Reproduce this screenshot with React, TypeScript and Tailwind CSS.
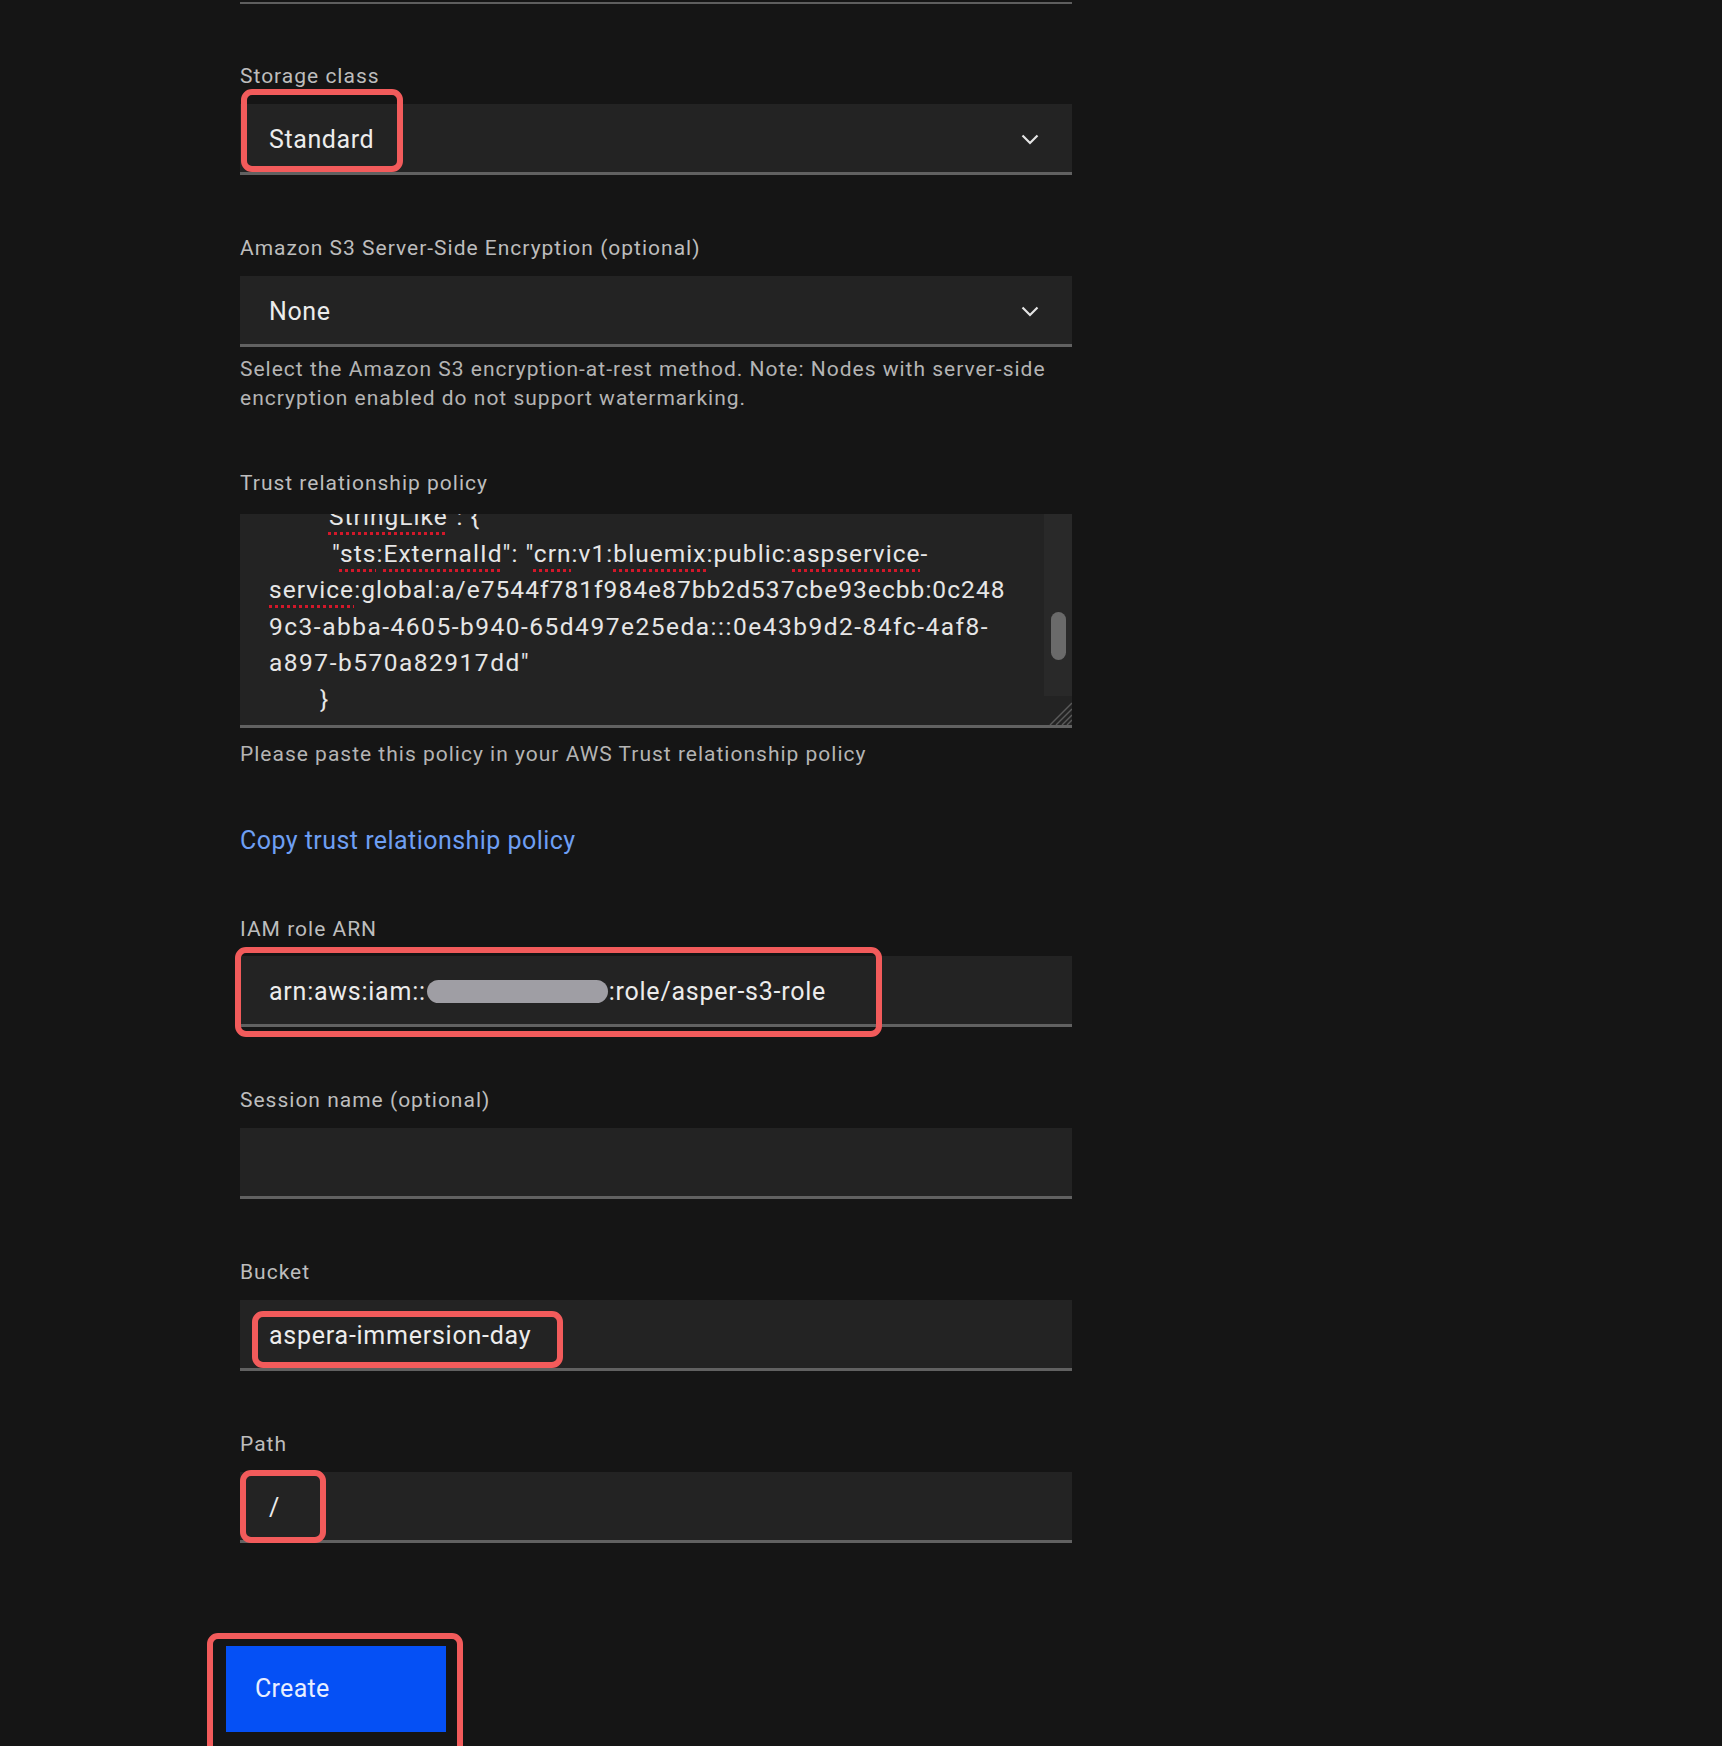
import React from "react";

const FONT = "font-['Roboto',sans-serif]";

function Chevron() {
  return (
    <svg width="18" height="11" viewBox="0 0 18 11" fill="none" className="shrink-0">
      <polyline points="1.5,1.5 9,9 16.5,1.5" stroke="#e4e4e4" strokeWidth="2.2" strokeLinejoin="miter" />
    </svg>
  );
}

function Label({ children, mt, mb }: { children: React.ReactNode; mt: string; mb: string }) {
  return (
    <div className={`${mt} ${mb} h-[24px] text-[21px] leading-[24px] tracking-[1px] text-[#bdbdbd]`}>{children}</div>
  );
}

function RedBox({ className }: { className: string }) {
  return <div className={`pointer-events-none absolute rounded-[11px] border-[6px] border-[#f25b5b] ${className}`} />;
}

const squiggle = "underline decoration-dotted decoration-[#d3182a] decoration-[3px] underline-offset-[7px]";

export default function App() {
  return (
    <div className={`${FONT} h-[1746px] w-full overflow-hidden bg-[#151515]`}>
      <div className="ml-[240px] flex w-[832px] flex-col">
        <div className="mt-[2px] h-[2px] bg-[#5e5e5e]" />

        {/* Storage class */}
        <Label mt="mt-[60px]" mb="mb-[16px]">Storage class</Label>
        <div className="relative flex h-[71px] items-center justify-between border-b-[3px] border-[#616161] bg-[#232323] pl-[29px] pr-[33px] pt-[3px]">
          <span className="text-[25px] tracking-[0.6px] text-[#ececec]">Standard</span>
          <Chevron />
          <RedBox className="left-[1px] top-[-15px] h-[83px] w-[162px]" />
        </div>

        {/* Encryption */}
        <Label mt="mt-[61px]" mb="mb-[16px]">Amazon S3 Server-Side Encryption (optional)</Label>
        <div className="flex h-[71px] items-center justify-between border-b-[3px] border-[#616161] bg-[#232323] pl-[29px] pr-[33px] pt-[3px]">
          <span className="text-[25px] tracking-[0.6px] text-[#ececec]">None</span>
          <Chevron />
        </div>
        <div className="mt-[8px] text-[21px] leading-[29px] tracking-[1px] text-[#b4b4b4]">
          Select the Amazon S3 encryption-at-rest method. Note: Nodes with server-side
          <br />
          encryption enabled do not support watermarking.
        </div>

        {/* Trust relationship policy */}
        <Label mt="mt-[58px]" mb="mb-[19px]">Trust relationship policy</Label>
        <div className="relative h-[214px] overflow-hidden border-b-[3px] border-[#616161] bg-[#232323]">
          <div className="mt-[-15px] pl-[29px] text-[24.5px] leading-[36.5px] tracking-[1.05px] text-[#e6e6e6] whitespace-pre">
            <div className="pl-[51px]">"<span className={squiggle}>StringLike</span>{"\": {"}</div>
            <div className="pl-[63px]">"<span className={squiggle}>sts</span>:<span className={squiggle}>ExternalId</span>{"\": \""}<span className={squiggle}>crn</span>:v1:<span className={squiggle}>bluemix</span>:public:<span className={squiggle}>aspservice</span>-</div>
            <div><span className={squiggle}>service</span>:global:a/e7544f781f984e87bb2d537cbe93ecbb:0c248</div>
            <div className="tracking-[1.5px]">9c3-abba-4605-b940-65d497e25eda:::0e43b9d2-84fc-4af8-</div>
            <div className="tracking-[1.5px]">a897-b570a82917dd"</div>
            <div className="pl-[51px]">{"}"}</div>
            <div className="pl-[38px]">{"},"}</div>
          </div>
          {/* scrollbar */}
          <div className="absolute right-0 top-0 h-[182px] w-[28px] bg-[#292929]">
            <div className="absolute left-[7px] top-[98px] h-[48px] w-[15px] rounded-full bg-[#6a6a6a]" />
          </div>
          {/* resize grip */}
          <svg className="absolute bottom-0 right-0" width="24" height="26" viewBox="0 0 24 26">
            <line x1="24" y1="4" x2="2" y2="26" stroke="#5a5a5a" strokeWidth="1.4" />
            <line x1="24" y1="10" x2="8" y2="26" stroke="#5a5a5a" strokeWidth="1.4" />
            <line x1="24" y1="16" x2="14" y2="26" stroke="#5a5a5a" strokeWidth="1.4" />
            <line x1="24" y1="21" x2="19" y2="26" stroke="#5a5a5a" strokeWidth="1.4" />
          </svg>
        </div>
        <div className="mt-[12px] text-[21px] leading-[29px] tracking-[1px] text-[#b4b4b4]">
          Please paste this policy in your AWS Trust relationship policy
        </div>

        <div className="mt-[57px] text-[25px] leading-[30px] tracking-[0.45px] text-[#6e9ff3]">Copy trust relationship policy</div>

        {/* IAM role ARN */}
        <Label mt="mt-[61px]" mb="mb-[15px]">IAM role ARN</Label>
        <div className="relative flex h-[71px] items-center border-b-[3px] border-[#616161] bg-[#232323] pl-[29px] pt-[3px]">
          <span className="flex items-center text-[25px] tracking-[0.75px] text-[#ececec]">
            arn:aws:iam::
            <span className="mx-[1px] inline-block h-[23px] w-[181px] rounded-full bg-[#9f9ea4]" />
            :role/asper-s3-role
          </span>
          <RedBox className="left-[-5px] top-[-9px] h-[90px] w-[647px]" />
        </div>

        {/* Session name */}
        <Label mt="mt-[61px]" mb="mb-[16px]">Session name (optional)</Label>
        <div className="h-[71px] border-b-[3px] border-[#616161] bg-[#232323]" />

        {/* Bucket */}
        <Label mt="mt-[61px]" mb="mb-[16px]">Bucket</Label>
        <div className="relative flex h-[71px] items-center border-b-[3px] border-[#616161] bg-[#232323] pl-[29px] pt-[3px]">
          <span className="text-[25px] tracking-[0.75px] text-[#ececec]">aspera-immersion-day</span>
          <RedBox className="left-[12px] top-[11px] h-[57px] w-[311px]" />
        </div>

        {/* Path */}
        <Label mt="mt-[61px]" mb="mb-[16px]">Path</Label>
        <div className="relative flex h-[71px] items-center border-b-[3px] border-[#616161] bg-[#232323] pl-[29px] pt-[3px]">
          <span className="text-[25px] tracking-[0.75px] text-[#ececec]">/</span>
          <RedBox className="left-[0px] top-[-2px] h-[73px] w-[86px]" />
        </div>

        {/* Create */}
        <div className="relative ml-[-14px] mt-[103px] w-[220px]">
          <div className="flex h-[86px] w-[220px] items-center bg-[#0550f5] pl-[29px] text-[25px] tracking-[0.3px] text-[#e8eeff]">
            Create
          </div>
          <RedBox className="left-[-19px] top-[-13px] h-[140px] w-[256px]" />
        </div>
      </div>
    </div>
  );
}
